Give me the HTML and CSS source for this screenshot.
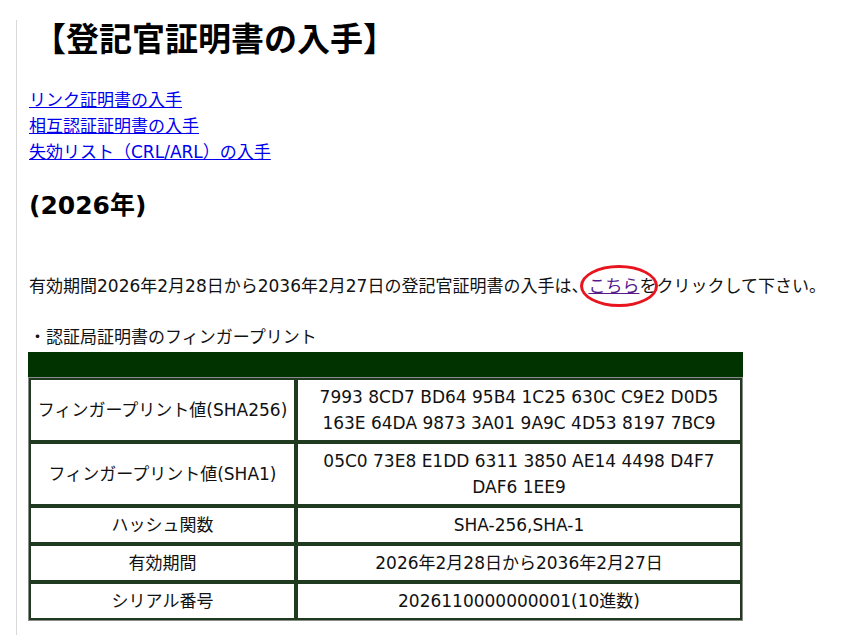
FILE: index.html
```html
<!DOCTYPE html>
<html lang="ja">
<head>
<meta charset="utf-8">
<title>登記官証明書の入手</title>
<link rel="stylesheet" href="styles.css">
</head>
<body>
<div class="page">
  <h1 class="title">【登記官証明書の入手】</h1>
  <ul class="links">
    <li><a href="#">リンク証明書の入手</a></li>
    <li><a href="#">相互認証証明書の入手</a></li>
    <li><a href="#">失効リスト（CRL/ARL）の入手</a></li>
  </ul>
  <h2 class="year">(2026年)</h2>
  <p class="lead">有効期間2026年2月28日から2036年2月27日の登記官証明書の入手は、<span class="mark"><a class="visited" href="#">こちら</a><span class="ring"></span></span>をクリックして下さい。</p>
  <p class="caption">・認証局証明書のフィンガープリント</p>
  <div class="tablebox">
    <div class="thead"></div>
    <table class="fp">
      <tr><td class="k">フィンガープリント値(SHA256)</td><td class="v">7993 8CD7 BD64 95B4 1C25 630C C9E2 D0D5<br>163E 64DA 9873 3A01 9A9C 4D53 8197 7BC9</td></tr>
      <tr><td class="k">フィンガープリント値(SHA1)</td><td class="v">05C0 73E8 E1DD 6311 3850 AE14 4498 D4F7<br>DAF6 1EE9</td></tr>
      <tr><td class="k">ハッシュ関数</td><td class="v">SHA-256,SHA-1</td></tr>
      <tr><td class="k">有効期間</td><td class="v">2026年2月28日から2036年2月27日</td></tr>
      <tr><td class="k">シリアル番号</td><td class="v">2026110000000001(10進数)</td></tr>
    </table>
  </div>
</div>
</body>
</html>
```
FILE: styles.css
```css
html, body {
  margin: 0;
  padding: 0;
  background: #fff;
}
body {
  font-family: "DejaVu Sans", "Noto Sans CJK JP", sans-serif;
  font-size: 17px;
  color: #111;
  overflow: hidden;
}
.page {
  margin-left: 16px;
  margin-top: 20px;
  border-left: 1px solid #d9d9d9;
  padding-left: 12px;
  padding-bottom: 14px;
}
.title {
  margin: 0;
  padding-left: 4px;
  font-size: 33px;
  line-height: 40px;
  font-weight: bold;
  color: #000;
}
.links {
  list-style: none;
  margin: 27px 0 0;
  padding: 0;
  line-height: 26px;
}
.links a, .lead a {
  color: #0000ee;
  text-decoration: underline;
}
.lead a.visited {
  color: #551a8b;
}
.year {
  margin: 26px 0 0;
  font-size: 25px;
  line-height: 30px;
  font-weight: bold;
  color: #000;
}
.lead {
  margin: 52px 0 0;
  line-height: 26px;
  white-space: nowrap;
}
.mark {
  position: relative;
  display: inline-block;
}
.ring {
  position: absolute;
  left: -8px;
  top: -8px;
  width: 72px;
  height: 36px;
  border: 3px solid #e8141e;
  border-radius: 50%;
}
.caption {
  margin: 25px 0 0;
  line-height: 26px;
}
.tablebox {
  width: 715px;
  margin-top: 2px;
  margin-left: -1px;
}
.thead {
  height: 25px;
  background: #003300;
}
.fp {
  width: 100%;
  border-collapse: separate;
  border-spacing: 0;
  border: 1px solid #8a8a8a;
}
.fp td {
  border: 2px solid #1f3a1f;
  text-align: center;
  line-height: 26px;
  padding: 4px 6px;
}
.fp td.k {
  width: 251px;
  vertical-align: middle;
}
.fp td.v {
  vertical-align: top;
}
```
